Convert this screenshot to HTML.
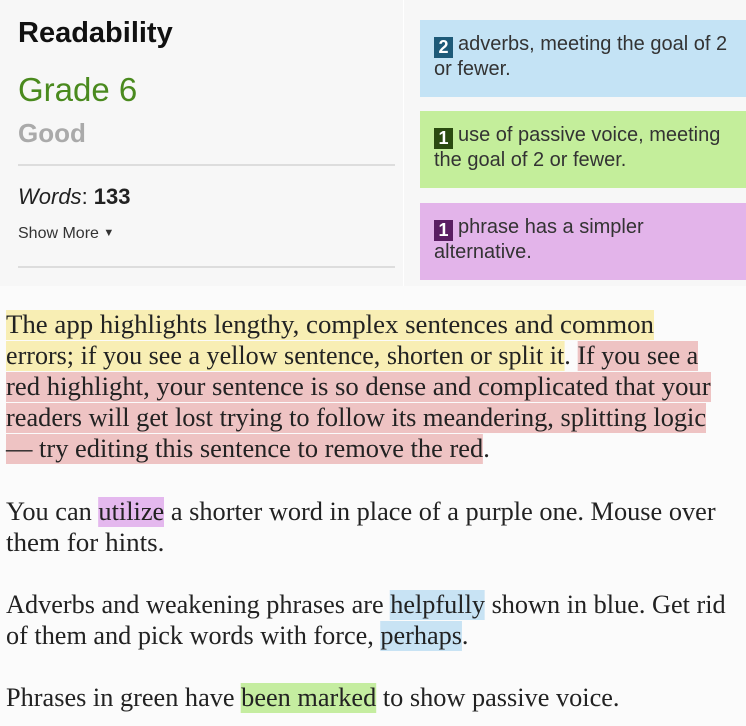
<!DOCTYPE html>
<html><head><meta charset="utf-8"><style>
body{margin:0;width:746px;height:726px;background:#fbfbfb;position:relative;overflow:hidden;font-family:"Liberation Sans",sans-serif}
.top{position:absolute;left:0;top:0;width:746px;height:286px;background:#f7f7f7}
.sep{position:absolute;left:403px;top:0;width:1px;height:286px;background:#fff}
.hr{position:absolute;left:18px;width:377px;height:2px;background:#ddd}
.t{position:absolute;left:18px;white-space:nowrap}
.box{position:absolute;left:420px;width:326px;height:77px;box-sizing:border-box;padding:13px 0 0 14px;font-size:20px;line-height:23px;color:#333;white-space:nowrap;overflow:hidden}
.b{display:inline-block;width:19px;height:21px;line-height:21px;text-align:center;color:#fff;font-weight:bold;font-size:18px;margin-right:5px;vertical-align:-3px}
.ln{position:absolute;left:6px;white-space:nowrap;font-family:"Liberation Serif",serif;font-size:26px;line-height:31px;height:31px;color:#222;transform-origin:0 0}
.y{background:#f8eeb4}.r{background:#eec3c3}.p{background:#e4b8ee}.bl{background:#c8e3f4}.g{background:#c5eda0}
.y,.r,.p,.bl,.g{padding:0 0 1px}
</style></head><body>
<div class="top"></div><div class="sep"></div>
<div class="t" style="top:17px;font-size:29px;font-weight:bold;color:#111">Readability</div>
<div class="t" style="top:71px;font-size:33px;color:#4a8a1e">Grade 6</div>
<div class="t" style="top:118px;font-size:26px;font-weight:bold;color:#aaa">Good</div>
<div class="hr" style="top:164px"></div>
<div class="t" style="top:184px;font-size:22px;color:#222"><i>Words</i>: <b>133</b></div>
<div class="t" style="top:225px;font-size:16px;color:#333">Show More <span style="font-size:11px;vertical-align:2px">&#9660;</span></div>
<div class="hr" style="top:266px"></div>
<div class="box" style="top:20px;background:#c4e3f5"><span class="b" style="background:#1e5a78">2</span>adverbs, meeting the goal of 2<br>or fewer.</div>
<div class="box" style="top:111px;background:#c4ee9b"><span class="b" style="background:#2a4a10">1</span>use of passive voice, meeting<br>the goal of 2 or fewer.</div>
<div class="box" style="top:203px;background:#e3b4ea"><span class="b" style="background:#5a1e62">1</span>phrase has a simpler<br>alternative.</div>

<div class="ln" style="top:309px"><span class="y">The app highlights lengthy, complex sentences and common</span></div>
<div class="ln" style="top:340px"><span class="y">errors; if you see a yellow sentence, shorten or split it</span>. <span class="r">If you see a</span></div>
<div class="ln" style="top:371px"><span class="r">red highlight, your sentence is so dense and complicated that your</span></div>
<div class="ln" style="top:402px"><span class="r">readers will get lost trying to follow its meandering, splitting logic</span></div>
<div class="ln" style="top:433px"><span class="r">— try editing this sentence to remove the red</span>.</div>
<div class="ln" style="top:496px">You can <span class="p">utilize</span> a shorter word in place of a purple one. Mouse over</div>
<div class="ln" style="top:527px">them for hints.</div>
<div class="ln" style="top:589px">Adverbs and weakening phrases are <span class="bl">helpfully</span> shown in blue. Get rid</div>
<div class="ln" style="top:620px">of them and pick words with force, <span class="bl">perhaps</span>.</div>
<div class="ln" style="top:682px">Phrases in green have <span class="g">been marked</span> to show passive voice.</div>
<script>
var w=[648,692,705,700,484,710,158,720,462,614];
document.querySelectorAll('.ln').forEach(function(e,i){var s=w[i]/e.scrollWidth;e.style.transform='scaleX('+s+')';});
</script>
</body></html>
